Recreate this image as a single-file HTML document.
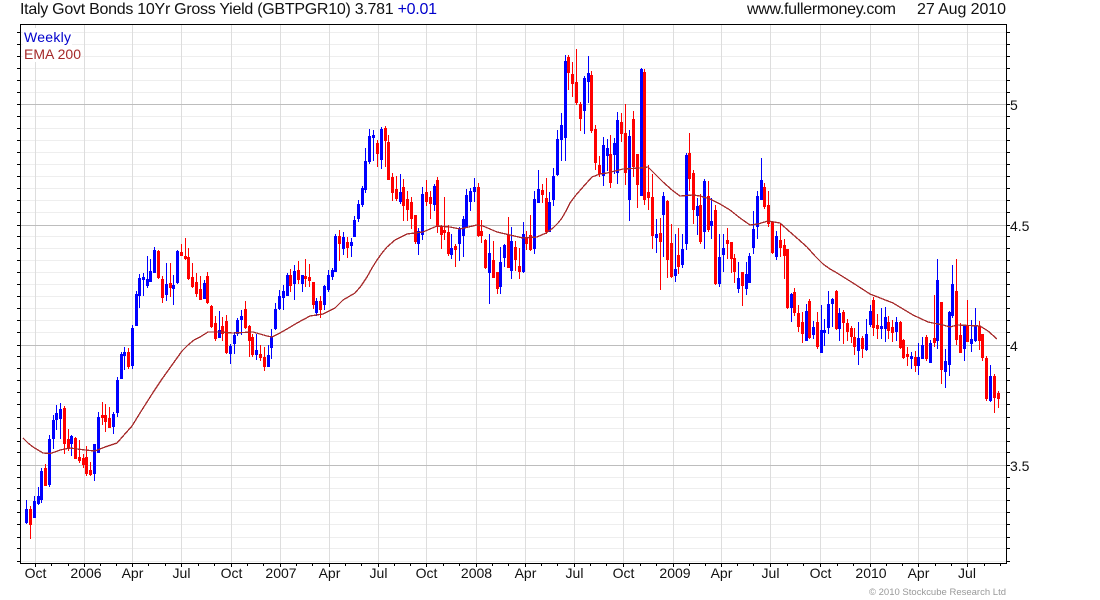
<!DOCTYPE html>
<html lang="en">
<head>
<meta charset="utf-8">
<title>Italy Govt Bonds 10Yr Gross Yield</title>
<style>
html,body{margin:0;padding:0;background:#fff;width:1100px;height:600px;overflow:hidden}
svg{display:block}
text{font-family:"Liberation Sans",Arial,sans-serif}
</style>
</head>
<body>
<svg width="1100" height="600" viewBox="0 0 1100 600" xmlns="http://www.w3.org/2000/svg">
<rect width="1100" height="600" fill="#fff"/>
<g shape-rendering="crispEdges" fill="none">
<path stroke="#eeeeee" d="M21 32.5H1006M21 44.5H1006M21 56.5H1006M21 68.5H1006M21 80.5H1006M21 92.5H1006M21 116.5H1006M21 128.5H1006M21 140.5H1006M21 152.5H1006M21 164.5H1006M21 176.5H1006M21 188.5H1006M21 200.5H1006M21 212.5H1006M21 236.5H1006M21 248.5H1006M21 260.5H1006M21 272.5H1006M21 284.5H1006M21 296.5H1006M21 308.5H1006M21 320.5H1006M21 332.5H1006M21 356.5H1006M21 368.5H1006M21 380.5H1006M21 392.5H1006M21 404.5H1006M21 417.5H1006M21 428.5H1006M21 441.5H1006M21 452.5H1006M21 477.5H1006M21 488.5H1006M21 500.5H1006M21 512.5H1006M21 524.5H1006M21 537.5H1006M21 548.5H1006M21 561.5H1006"/>
<path stroke="#dddddd" d="M35.5 25V563M84.5 25V563M132.5 25V563M181.5 25V563M231.5 25V563M280.5 25V563M329.5 25V563M378.5 25V563M426.5 25V563M476.5 25V563M525.5 25V563M574.5 25V563M623.5 25V563M673.5 25V563M721.5 25V563M770.5 25V563M820.5 25V563M870.5 25V563M918.5 25V563M967.5 25V563"/>
<path stroke="#bdbdbd" d="M21 104.5H1006M21 225.5H1006M21 345.5H1006M21 465.5H1006"/>
<rect x="23" y="28" width="49" height="17" fill="#fff"/>
<rect x="23" y="45" width="58" height="17" fill="#fff"/>
<path stroke="#000" d="M20.5 24.5H1006.5V563.5H20.5Z"/>
<path stroke="#000" d="M17 32.5H20M17 44.5H20M17 56.5H20M17 68.5H20M17 80.5H20M17 92.5H20M17 104.5H20M17 116.5H20M17 128.5H20M17 140.5H20M17 152.5H20M17 164.5H20M17 176.5H20M17 188.5H20M17 200.5H20M17 212.5H20M17 225.5H20M17 236.5H20M17 248.5H20M17 260.5H20M17 272.5H20M17 284.5H20M17 296.5H20M17 308.5H20M17 320.5H20M17 332.5H20M17 345.5H20M17 356.5H20M17 368.5H20M17 380.5H20M17 392.5H20M17 404.5H20M17 417.5H20M17 428.5H20M17 441.5H20M17 452.5H20M17 465.5H20M17 477.5H20M17 488.5H20M17 500.5H20M17 512.5H20M17 524.5H20M17 537.5H20M17 548.5H20M17 561.5H20"/>
<path stroke="#000" d="M1007 32.5H1010M1007 44.5H1010M1007 56.5H1010M1007 68.5H1010M1007 80.5H1010M1007 92.5H1010M1007 104.5H1010M1007 116.5H1010M1007 128.5H1010M1007 140.5H1010M1007 152.5H1010M1007 164.5H1010M1007 176.5H1010M1007 188.5H1010M1007 200.5H1010M1007 212.5H1010M1007 225.5H1010M1007 236.5H1010M1007 248.5H1010M1007 260.5H1010M1007 272.5H1010M1007 284.5H1010M1007 296.5H1010M1007 308.5H1010M1007 320.5H1010M1007 332.5H1010M1007 345.5H1010M1007 356.5H1010M1007 368.5H1010M1007 380.5H1010M1007 392.5H1010M1007 404.5H1010M1007 417.5H1010M1007 428.5H1010M1007 441.5H1010M1007 452.5H1010M1007 465.5H1010M1007 477.5H1010M1007 488.5H1010M1007 500.5H1010M1007 512.5H1010M1007 524.5H1010M1007 537.5H1010M1007 548.5H1010M1007 561.5H1010"/>
<path stroke="#000" d="M35.5 564V567M84.5 564V567M132.5 564V567M181.5 564V567M231.5 564V567M280.5 564V567M329.5 564V567M378.5 564V567M426.5 564V567M476.5 564V567M525.5 564V567M574.5 564V567M623.5 564V567M673.5 564V567M721.5 564V567M770.5 564V567M820.5 564V567M870.5 564V567M918.5 564V567M967.5 564V567"/>
<path stroke="#000" d="M51.5 564V566M68.5 564V566M100.5 564V566M116.5 564V566M148.5 564V566M165.5 564V566M198.5 564V566M214.5 564V566M247.5 564V566M263.5 564V566M296.5 564V566M312.5 564V566M345.5 564V566M361.5 564V566M394.5 564V566M410.5 564V566M443.5 564V566M459.5 564V566M492.5 564V566M508.5 564V566M541.5 564V566M557.5 564V566M590.5 564V566M606.5 564V566M640.5 564V566M656.5 564V566M689.5 564V566M705.5 564V566M737.5 564V566M753.5 564V566M787.5 564V566M803.5 564V566M837.5 564V566M853.5 564V566M886.5 564V566M902.5 564V566M935.5 564V566M951.5 564V566M984.5 564V566M1000.5 564V566"/>
</g>

<!-- wicks -->
<g transform="translate(.5 .5)" shape-rendering="crispEdges" fill="none" stroke-linecap="square">
<path stroke="#0000ff" stroke-width="1" d="M26 500V523M34 496V517M38 487V504M41 468V502M49 435V486M53 415V448M56 405V429M60 403V438M71 435V455M94 444V480M98 412V452M113 412V433M117 377V416M121 352V378M124 347V369M132 325V368M136 291V325M139 274V307M143 273V295M147 256V287M150 259V281M154 247V272M166 263V300M173 275V304M177 250V283M204 280V298M219 311V337M230 344V363M234 332V353M237 318V335M241 310V334M256 334V359M268 345V366M271 329V358M275 303V329M279 290V309M283 285V309M287 273V295M294 265V299M302 275V291M316 298V315M324 285V309M328 270V291M332 268V279M335 234V271M343 232V254M351 238V256M354 216V236M358 200V221M362 186V206M365 148V192M369 129V163M373 130V160M381 127V168M400 174V203M418 228V254M422 187V239M434 184V210M451 234V258M459 227V260M463 216V256M466 189V226M470 188V210M474 178V201M489 234V303M500 247V293M504 244V266M511 227V278M523 222V272M534 191V253M538 170V202M549 192V231M553 168V205M557 130V175M561 113V160M565 55V160M584 76V133M588 56V102M603 137V185M607 139V170M614 138V173M617 112V183M629 130V220M641 68V195M656 219V252M663 192V256M675 234V281M682 234V267M686 153V249M697 198V234M704 179V248M711 198V238M719 234V286M723 234V271M738 262V292M746 262V294M749 253V282M753 211V253M757 191V238M761 158V199M776 231V259M791 293V321M806 304V340M813 321V338M821 305V352M824 319V345M828 291V333M832 298V326M839 308V340M858 322V364M866 319V350M870 305V326M881 308V338M885 307V341M896 317V340M911 352V368M918 343V374M922 337V358M930 340V362M937 259V348M945 349V387M949 311V375M952 265V317M964 326V360M971 320V351M975 308V341M990 365V401"/>
<path stroke="#ff0000" stroke-width="1" d="M30 506V538M45 464V485M64 406V453M68 429V450M75 437V458M79 440V462M83 454V467M86 446V475M90 462V475M102 402V424M105 404V431M109 407V427M128 348V368M158 250V278M162 276V302M170 263V296M181 244V255M185 238V259M188 248V279M192 263V287M196 273V296M200 276V299M207 272V303M211 305V327M215 316V340M222 317V340M226 315V353M245 301V328M249 325V356M252 334V356M260 345V360M264 347V370M290 269V291M298 261V283M305 259V286M309 264V286M313 282V308M320 296V317M339 230V260M347 237V257M377 140V166M385 126V166M388 135V179M392 173V200M396 176V200M403 179V220M407 191V220M411 197V228M415 215V243M426 180V205M430 191V218M437 177V232M441 225V248M444 197V239M448 225V255M455 244V266M478 183V236M481 220V242M485 239V268M493 241V277M497 272V293M508 217V267M515 241V270M519 248V278M526 231V249M530 215V250M542 184V202M546 178V233M568 55V89M572 62V96M576 49V104M580 102V130M591 71V132M595 125V169M599 156V176M610 135V187M621 113V141M625 104V184M633 111V176M637 154V207M644 69V204M648 165V209M652 174V248M660 218V289M667 200V277M671 224V277M678 228V273M689 133V190M693 170V223M700 194V243M708 181V231M715 205V284M727 228V258M731 242V272M734 254V282M742 272V305M764 183V208M768 191V226M772 221V253M780 223V256M784 239V278M787 249V308M794 288V315M798 305V331M802 312V342M809 299V338M817 312V348M836 290V329M843 310V343M847 319V340M851 326V342M854 328V354M862 336V357M873 297V335M877 314V338M888 316V338M892 320V341M900 321V348M903 339V358M907 347V365M915 351V371M926 335V360M934 295V346M941 302V383M956 259V344M960 323V352M967 300V341M979 321V349M982 334V360M986 356V400M994 374V412M998 391V407"/>
</g>
<!-- bodies -->
<g transform="translate(.5 0)" shape-rendering="crispEdges" fill="none" stroke-width="3">
<path stroke="#0000ff" d="M26 509V523M34 501V518M38 496V504M41 471V500M49 439V485M53 420V439M56 413V420M60 409V419M71 436V444M94 444V474M98 417V453M113 414V427M117 380V413M121 354V379M124 352V356M132 328V366M136 294V326M139 278V296M143 277V280M147 279V286M150 271V282M154 250V273M166 284V295M173 285V289M177 251V283M204 283V299M219 330V338M230 346V354M234 335V344M237 320V334M241 316V320M256 350V355M268 355V367M271 337V348M275 309V329M279 296V309M283 291V298M287 275V296M294 271V284M302 275V284M316 301V313M324 286V305M328 275V290M332 270V277M335 236V272M343 237V249M351 242V246M354 220V237M358 204V219M362 188V205M365 161V190M369 136V162M373 135V138M381 129V160M400 192V202M418 231V244M422 194V235M434 186V205M451 248V255M459 228V244M463 219V236M466 195V227M470 191V202M474 187V192M489 253V273M500 262V287M504 245V258M511 241V271M523 234V272M534 199V249M538 189V203M549 202V232M553 176V200M557 139V175M561 125V140M565 61V138M584 78V111M588 73V82M603 145V176M607 148V156M614 143V155M617 120V173M629 136V200M641 69V196M656 234V238M663 196V215M675 269V276M682 249V265M686 155V244M697 206V216M704 181V232M711 221V226M719 257V284M723 248V255M738 278V289M746 274V289M749 256V283M753 229V248M757 196V227M761 180V200M776 236V257M791 294V308M806 311V341M813 327V335M821 330V353M824 330V333M828 304V328M832 299V304M839 313V329M858 338V351M866 334V350M870 311V325M881 326V329M885 317V329M896 322V332M911 356V359M918 357V366M922 345V359M930 343V363M937 280V341M945 361V372M949 312V365M952 284V316M964 326V349M971 339V344M975 325V341M990 376V401"/>
<path stroke="#ff0000" d="M30 509V525M45 468V486M64 408V444M68 439V449M75 438V459M79 457V461M83 458V465M86 457V474M90 470V475M102 415V418M105 415V422M109 418V428M128 352V367M158 251V278M162 279V298M170 283V288M181 252V256M185 256V259M188 257V279M192 277V287M196 282V294M200 289V300M207 276V303M211 306V327M215 323V339M222 326V334M226 321V353M245 309V328M249 326V341M252 337V355M260 354V358M264 357V367M290 275V286M298 270V280M305 276V279M309 277V281M313 282V305M320 301V310M339 236V244M347 242V248M377 143V154M385 128V141M388 142V180M392 177V193M396 189V199M403 187V206M407 199V210M411 202V219M415 215V242M426 192V202M430 197V204M437 180V227M441 226V235M444 230V233M448 232V254M455 246V250M478 187V236M481 231V236M485 240V268M493 260V278M497 272V289M508 235V268M515 247V260M519 266V272M526 237V244M530 235V250M542 190V195M546 198V232M568 57V73M572 74V84M576 82V103M580 104V119M591 75V131M595 129V163M599 165V174M610 154V183M621 122V134M625 133V173M633 119V167M637 154V185M644 72V200M648 192V198M652 197V236M660 233V242M667 201V260M671 243V277M678 255V267M689 153V179M693 173V210M700 205V242M708 196V230M715 210V284M727 240V244M731 242V259M734 258V272M742 272V286M764 187V207M768 205V224M772 222V253M780 240V248M784 245V256M787 249V308M794 292V313M798 313V327M802 322V334M809 301V338M817 322V347M836 291V329M843 312V323M847 323V332M851 328V337M854 337V347M862 338V349M873 300V328M877 325V329M888 322V331M892 327V333M900 322V348M903 340V358M907 354V357M915 357V366M926 337V359M934 338V343M941 302V370M956 291V340M960 335V353M967 325V342M979 326V341M982 334V358M986 358V399M994 376V398M998 393V399"/>
</g>

<!-- EMA 200 -->
<polyline fill="none" stroke="#a52a2a" stroke-width="1.3" stroke-linejoin="round" shape-rendering="crispEdges" points="23,438 28,443 33,447 38,450 43,453 50,453.5 55,452 60,450 70,448 85,450 95,451 105,447 117,443 124,435 132,426 140,413 147,402 154,391 162,379 172,365 182,351 188,345 194,340 200,337 208,332 220,332 233,333 253,332 267,336 272,337 280,333 287,329 297,323 310,316 323,314 335,308 343,300 355,293 361,286 367,277 372,268 377,260 382,253 387,247 395,240 407,234 423,232 437,226 450,227 460,229 477,225 483,226 497,232 510,235 523,238 537,237 546,233 553,228 558,223 562,218 566,211 570,203 576,195 583,187 592,177 600,174 607,173 623,169 640,168 648,167 655,174 663,182 672,190 680,196 693,195 700,196 710,199 720,204 730,210 740,218 750,225 758,224 768,221 780,223 790,232 798,239 807,247 815,256 823,264 830,269 837,273 853,283 870,294 893,303 903,309 913,315 928,322 943,325 950,327 957,325 980,326 988,331 997,339"/>

<!-- header -->
<text x="20" y="14" font-size="16" fill="#111" textLength="417" lengthAdjust="spacing">Italy Govt Bonds 10Yr Gross Yield (GBTPGR10) 3.781 <tspan fill="#0000cc">+0.01</tspan></text>
<text x="747" y="14" font-size="16" fill="#111" textLength="149" lengthAdjust="spacing">www.fullermoney.com</text>
<text x="917" y="14" font-size="16" fill="#111" textLength="89" lengthAdjust="spacing">27 Aug 2010</text>

<!-- legend -->
<text x="24" y="42" font-size="14" fill="#0000cc" textLength="47" lengthAdjust="spacing">Weekly</text>
<text x="24" y="59" font-size="14" fill="#a52a2a" textLength="57" lengthAdjust="spacing">EMA 200</text>

<!-- y axis -->
<g font-size="14" fill="#111">
<text x="1010" y="110">5</text>
<text x="1010" y="231">4.5</text>
<text x="1010" y="351">4</text>
<text x="1010" y="471">3.5</text>
</g>

<!-- x axis -->
<g font-size="14" fill="#111" text-anchor="middle">
<text x="35.5" y="578">Oct</text>
<text x="86" y="578">2006</text>
<text x="132.5" y="578">Apr</text>
<text x="181.5" y="578">Jul</text>
<text x="231.5" y="578">Oct</text>
<text x="281" y="578">2007</text>
<text x="329.5" y="578">Apr</text>
<text x="378.5" y="578">Jul</text>
<text x="426.5" y="578">Oct</text>
<text x="476.5" y="578">2008</text>
<text x="525.5" y="578">Apr</text>
<text x="574.5" y="578">Jul</text>
<text x="623.5" y="578">Oct</text>
<text x="675" y="578">2009</text>
<text x="721.5" y="578">Apr</text>
<text x="770.5" y="578">Jul</text>
<text x="820.5" y="578">Oct</text>
<text x="871" y="578">2010</text>
<text x="918.5" y="578">Apr</text>
<text x="967" y="578">Jul</text>
</g>

<text x="869" y="595" font-size="9.5" fill="#999" textLength="137" lengthAdjust="spacing">© 2010 Stockcube Research Ltd</text>
</svg>
</body>
</html>
